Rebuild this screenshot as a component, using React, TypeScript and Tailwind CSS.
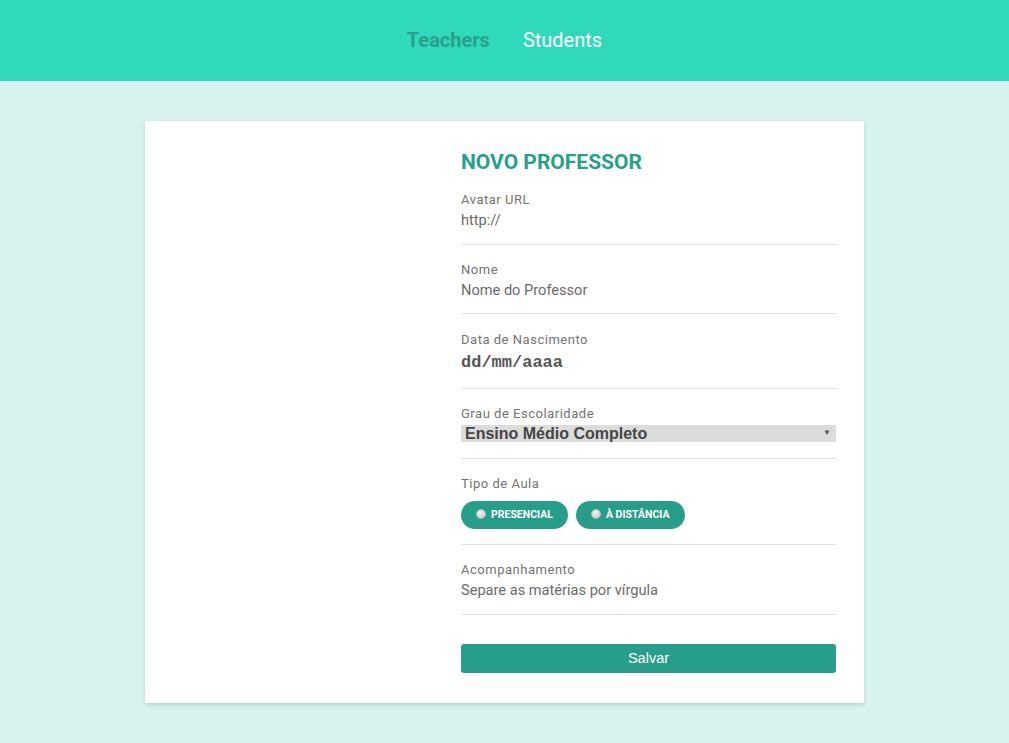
import { useState } from 'react'

const field = 'border-b border-[#e0e0e0] pt-[17px] pb-[14px]'
const label = 'block text-[13px] leading-[16px] tracking-[0.04em] text-[#737373]'
const input =
  'block w-full h-[20px] mt-[2px] text-[14.6px] leading-[20px] text-[#5f5f5f] placeholder:text-[#6b6b6b] outline-none bg-transparent'

function Radio({ text }: { text: string }) {
  return (
    <label className="flex items-center h-[28px] rounded-full bg-[#279e89] pl-[15px] pr-[15px] cursor-pointer">
      <span className="w-[10px] h-[10px] rounded-full bg-[radial-gradient(circle_at_40%_35%,#f4f4f4,#c4c4c4)] border border-[#bdbdbd] -mt-[3px] mr-[5px]" />
      <span className="text-[10.5px] font-bold text-white">{text}</span>
    </label>
  )
}

export default function App() {
  const [grau, setGrau] = useState('medio')

  return (
    <div className="min-h-[743px] bg-[#d8f3ed] font-['Roboto','Liberation_Sans',sans-serif]">
      <header className="h-[81px] bg-[#31d9bb] flex items-center justify-center gap-[33px] pb-[2px]">
        <a className="text-[20px] leading-[24px] font-bold text-[#28a08a]">Teachers</a>
        <a className="text-[20px] leading-[24px] text-white">Students</a>
      </header>

      <main className="flex justify-center pt-[40px] pb-[40px]">
        <div className="w-[719px] bg-white shadow-[0_2px_4px_rgba(0,0,0,0.15)] flex pt-[29px] pb-[30px]">
          <div className="w-[316px]" />
          <form className="w-[375px]" onSubmit={e => e.preventDefault()}>
            <h1 className="text-[21px] leading-[24px] font-bold text-[#27a08a] mb-[1px]">NOVO PROFESSOR</h1>

            <div className={field}>
              <span className={label}>Avatar URL</span>
              <input className={input} placeholder="http://" />
            </div>

            <div className="border-b border-[#e0e0e0] pt-[17px] pb-[13px]">
              <span className={label}>Nome</span>
              <input className={input} placeholder="Nome do Professor" />
            </div>

            <div className="border-b border-[#e0e0e0] pt-[18px] pb-[15px]">
              <span className={label}>Data de Nascimento</span>
              <input
                className="block w-full h-[25px] pt-[4px] text-[17px] leading-[21px] font-bold font-['Liberation_Mono',monospace] placeholder:text-[#555] outline-none"
                placeholder="dd/mm/aaaa"
              />
            </div>

            <div className="border-b border-[#e0e0e0] pt-[17px] pb-[16px]">
              <span className={label}>Grau de Escolaridade</span>
              <div className="relative mt-[3px]">
                <select
                  value={grau}
                  onChange={e => setGrau(e.target.value)}
                  className="block w-full h-[17px] appearance-none bg-[#dcdcdc] pl-[4px] text-[16px] leading-[17px] font-bold text-[#454545] font-['Liberation_Sans',Arial,sans-serif] outline-none"
                >
                  <option value="fundamental">Ensino Fundamental</option>
                  <option value="medio">Ensino Médio Completo</option>
                  <option value="superior">Ensino Superior</option>
                </select>
                <span className="absolute right-[5px] top-[2px] text-[8px] text-[#555] pointer-events-none">▼</span>
              </div>
            </div>

            <div className="border-b border-[#e0e0e0] pt-[17px] pb-[15px]">
              <span className={label}>Tipo de Aula</span>
              <div className="flex gap-[8px] mt-[9px]">
                <Radio text="PRESENCIAL" />
                <Radio text="À DISTÂNCIA" />
              </div>
            </div>

            <div className={field}>
              <span className={label}>Acompanhamento</span>
              <input className={input} placeholder="Separe as matérias por vírgula" />
            </div>

            <button
              type="submit"
              className="mt-[29px] w-full h-[29px] rounded-[3px] bg-[#279e89] text-white text-[14.5px] font-['Liberation_Sans',Arial,sans-serif]"
            >
              Salvar
            </button>
          </form>
        </div>
      </main>
    </div>
  )
}
